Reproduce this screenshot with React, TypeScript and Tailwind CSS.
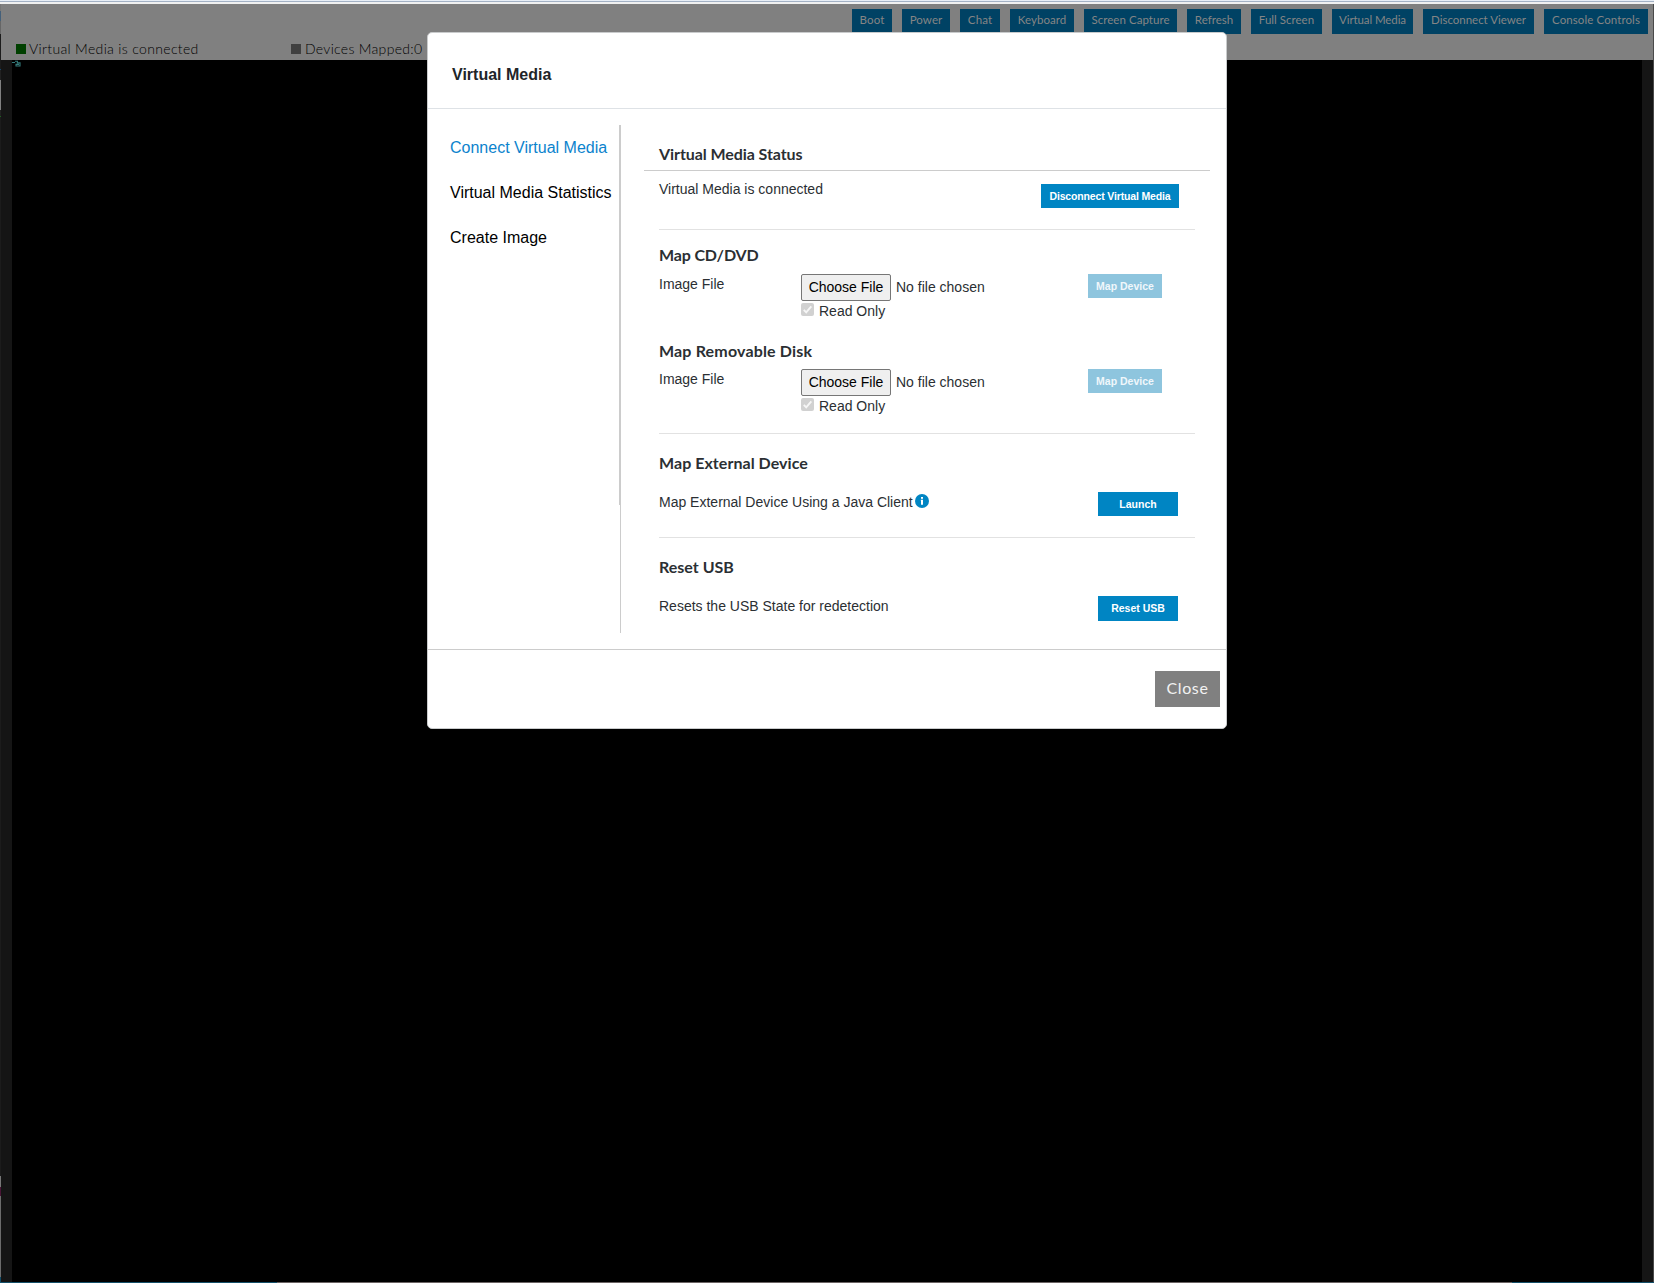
import React from 'react';

type Action = { label: string; box: string };

const actions: Action[] = [
  { label: 'Boot', box: 'w-[40px] tracking-[0.1px]' },
  { label: 'Power', box: 'w-[48px] tracking-[0.1px]' },
  { label: 'Chat', box: 'w-[40px] tracking-[0.1px]' },
  { label: 'Keyboard', box: 'w-[64px] tracking-[0.02px]' },
  { label: 'Screen Capture', box: 'w-[93px] tracking-[0.05px]' },
  { label: 'Refresh', box: 'w-[54px] tracking-[0px]' },
  { label: 'Full Screen', box: 'w-[71px] tracking-[0.02px]' },
  { label: 'Virtual Media', box: 'w-[81px] tracking-[-0.1px]' },
  { label: 'Disconnect Viewer', box: 'w-[111px] tracking-[-0.02px]' },
  { label: 'Console Controls', box: 'w-[104px] tracking-[0.1px]' },
];

function Toolbar() {
  return (
    <header className="flex h-14 shrink-0 flex-col bg-[#808080] font-['Lato',sans-serif]">
      <div className="mt-[5px] flex h-[25px] justify-end gap-2.5 pr-[5px]">
        {actions.map((a) => (
          <button
            key={a.label}
            className={`${a.box} h-[25px] bg-[#004264] pb-[3px] text-center text-[11.5px] leading-[22px] whitespace-nowrap text-[#858585]`}
          >
            {a.label}
          </button>
        ))}
      </div>
      <div className="mt-[5px] flex h-5 pl-[15px] text-sm leading-5 font-light text-black">
        <div className="flex w-[275px] items-center">
          <span className="mr-[3px] size-2.5 bg-[#004000]" />
          <span className="tracking-[0.34px]">Virtual Media is connected</span>
        </div>
        <div className="flex items-center">
          <span className="mr-1 size-2.5 bg-[#404040]" />
          <span className="tracking-[0.3px]">Devices Mapped:0</span>
        </div>
      </div>
    </header>
  );
}

function LeftEdge() {
  return (
    <div className="flex w-px shrink-0 flex-col bg-[#222222]">
      <div className="h-[7px] bg-[#777777]" />
      <div className="h-2.5 bg-[#44607a]" />
      <div className="h-[13px] bg-[#666666]" />
      <div className="h-[35px] bg-[#1c1c1c]" />
      <div className="h-px bg-[#14486e]" />
      <div className="h-2.5 bg-[#222222]" />
      <div className="h-[30px] bg-[#808080]" />
      <div className="h-[6px] bg-[#222222]" />
      <div className="h-px bg-[#206020]" />
      <div className="grow bg-[#1c1c1c]" />
      <div className="h-[11px] bg-[#777777]" />
      <div className="h-[9px] bg-[#4a1436]" />
      <div className="h-[81px] bg-[#6c6c6c]" />
      <div className="h-[5px] bg-[#0e4a66]" />
    </div>
  );
}

function Heading({ children, className = '' }: { children: React.ReactNode; className?: string }) {
  return (
    <h3 className={`h-6 font-['Lato',sans-serif] text-[16px] leading-6 font-bold text-[#2b2f33] ${className}`}>
      {children}
    </h3>
  );
}

function BlueButton({ className, children, disabled }: { className: string; children: React.ReactNode; disabled?: boolean }) {
  return (
    <button
      disabled={disabled}
      className={`${className} ${disabled ? 'bg-[#8ec5de] text-[#f0f7fb]' : 'bg-[#0085c3] text-white'} shrink-0 text-center text-[10.5px] leading-6 font-bold whitespace-nowrap`}
    >
      {children}
    </button>
  );
}

function MapRow({ className }: { className: string }) {
  return (
    <div className={`${className} flex items-start justify-between pr-[33px]`}>
      <div className="flex">
        <span className="w-[142px]">Image File</span>
        <div>
          <div className="flex h-[27px] items-start">
            <button className="mr-[5px] h-[27px] w-[90px] rounded-[2px] border border-[#767676] bg-[#efefef] text-center leading-[25px] text-black">
              Choose File
            </button>
            <span className="mt-[3px]">No file chosen</span>
          </div>
          <label className="flex h-5">
            <svg viewBox="0 0 13 13" className="mt-[2px] mr-[5px] size-[13px]">
              <rect width="13" height="13" rx="2" fill="#d1d1d1" />
              <path d="M2.8 6.8 5.2 9.4 10.3 3.3" fill="none" stroke="#f6f6f6" strokeWidth="1.9" />
            </svg>
            <span>Read Only</span>
          </label>
        </div>
      </div>
      <BlueButton disabled className="h-6 w-[74px]">Map Device</BlueButton>
    </div>
  );
}

function VirtualMediaDialog() {
  return (
    <div
      role="dialog"
      className="absolute top-8 left-[427px] flex h-[697px] w-[800px] flex-col rounded-[5px] border border-[#c9cbcc] bg-white text-sm leading-5 text-[#2b2f33]"
    >
      <div className="h-[76px] border-b border-[#dee2e6] pt-[30px] pl-6">
        <h2 className="text-base leading-6 font-bold text-[#212529]">Virtual Media</h2>
      </div>

      <div className="flex h-[541px] border-b border-[#cccccc] pt-4">
        <nav className="flex h-[380px] w-[192px] flex-col gap-[21px] border-r border-[#cccccc] pt-[11px] pl-[22px] text-base leading-6 whitespace-nowrap text-black">
          <a className="text-[#0c83cd]">Connect Virtual Media</a>
          <a>Virtual Media Statistics</a>
          <a>Create Image</a>
        </nav>

        <div className="h-[508px] grow border-l border-[#cccccc] pr-4 pl-[23px]">
          <div className="h-[46px] border-b border-[#cccccc] pt-[17px] pl-[15px]">
            <Heading className="tracking-[-0.08px]">Virtual Media Status</Heading>
          </div>

          <div className="mx-[15px]">
            <section className="flex h-[59px] items-start justify-between border-b border-[#e2e2e2] pt-2 pr-4">
              <span>Virtual Media is connected</span>
              <BlueButton className="mt-[5px] h-6 w-[138px] tracking-[-0.15px]">Disconnect Virtual Media</BlueButton>
            </section>

            <section className="h-[204px] border-b border-[#e2e2e2] pt-[13px]">
              <Heading className="tracking-[-0.15px]">Map CD/DVD</Heading>
              <MapRow className="mt-[7px]" />
              <div className="h-[18px]" />
              <Heading className="tracking-[0.17px]">Map Removable Disk</Heading>
              <MapRow className="mt-[6px]" />
            </section>

            <section className="h-[104px] border-b border-[#e2e2e2] pt-[17px]">
              <Heading className="tracking-[0.05px]">Map External Device</Heading>
              <div className="mt-[17px] flex items-start justify-between pr-[17px]">
                <span className="flex">
                  Map External Device Using a Java Client
                  <svg viewBox="0 0 14 14" className="mt-[2px] ml-[2px] size-[14px]">
                    <circle cx="7" cy="7" r="7" fill="#0085c3" />
                    <rect x="6" y="3" width="2" height="1.8" fill="#fff" />
                    <path d="M5.8 5.8H8v4.9H6V6.8h-.2z" fill="#fff" />
                  </svg>
                </span>
                <BlueButton className="h-6 w-20">Launch</BlueButton>
              </div>
            </section>

            <section className="pt-[17px]">
              <Heading>Reset USB</Heading>
              <div className="mt-[17px] flex items-start justify-between pr-[17px]">
                <span>Resets the USB State for redetection</span>
                <BlueButton className="h-[25px] w-20 pb-px">Reset USB</BlueButton>
              </div>
            </section>
          </div>
        </div>
      </div>

      <div className="flex justify-end pt-[21px] pr-[6px]">
        <button className="h-9 w-[65px] bg-[#808080] pb-[2px] font-['Lato',sans-serif] text-base leading-[34px] tracking-[0.6px] text-[#f2f2f2]">
          Close
        </button>
      </div>
    </div>
  );
}

export default function App() {
  return (
    <div className="relative flex h-[1283px] w-[1654px] flex-col overflow-hidden bg-black font-['Liberation_Sans',Arial,sans-serif]">
      <div className="h-px shrink-0 bg-[#e8eef6]" />
      <div className="h-px shrink-0 bg-[#a3b1c4]" />
      <div className="h-0.5 shrink-0 bg-[#f0f0f0]" />
      <div className="flex grow">
        <LeftEdge />
        <div className="flex grow flex-col">
          <Toolbar />
          <main className="flex grow border-x-[11px] border-[#151515] bg-black">
            <svg viewBox="0 0 9 7" className="h-[7px] w-[9px]">
              <path d="M0 2.5h3M3 1.3h2.4v1.6H8V6H4V4.4h3" fill="none" stroke="#347a7a" strokeWidth="1.1" />
            </svg>
          </main>
        </div>
        <div className="w-px shrink-0 bg-[#4a4a4a]" />
      </div>
      <div className="flex h-px shrink-0">
        <div className="w-[277px] bg-[#14506a]" />
        <div className="w-[1235px] bg-[#6b6464]" />
        <div className="grow bg-[#14506a]" />
      </div>
      <VirtualMediaDialog />
    </div>
  );
}
